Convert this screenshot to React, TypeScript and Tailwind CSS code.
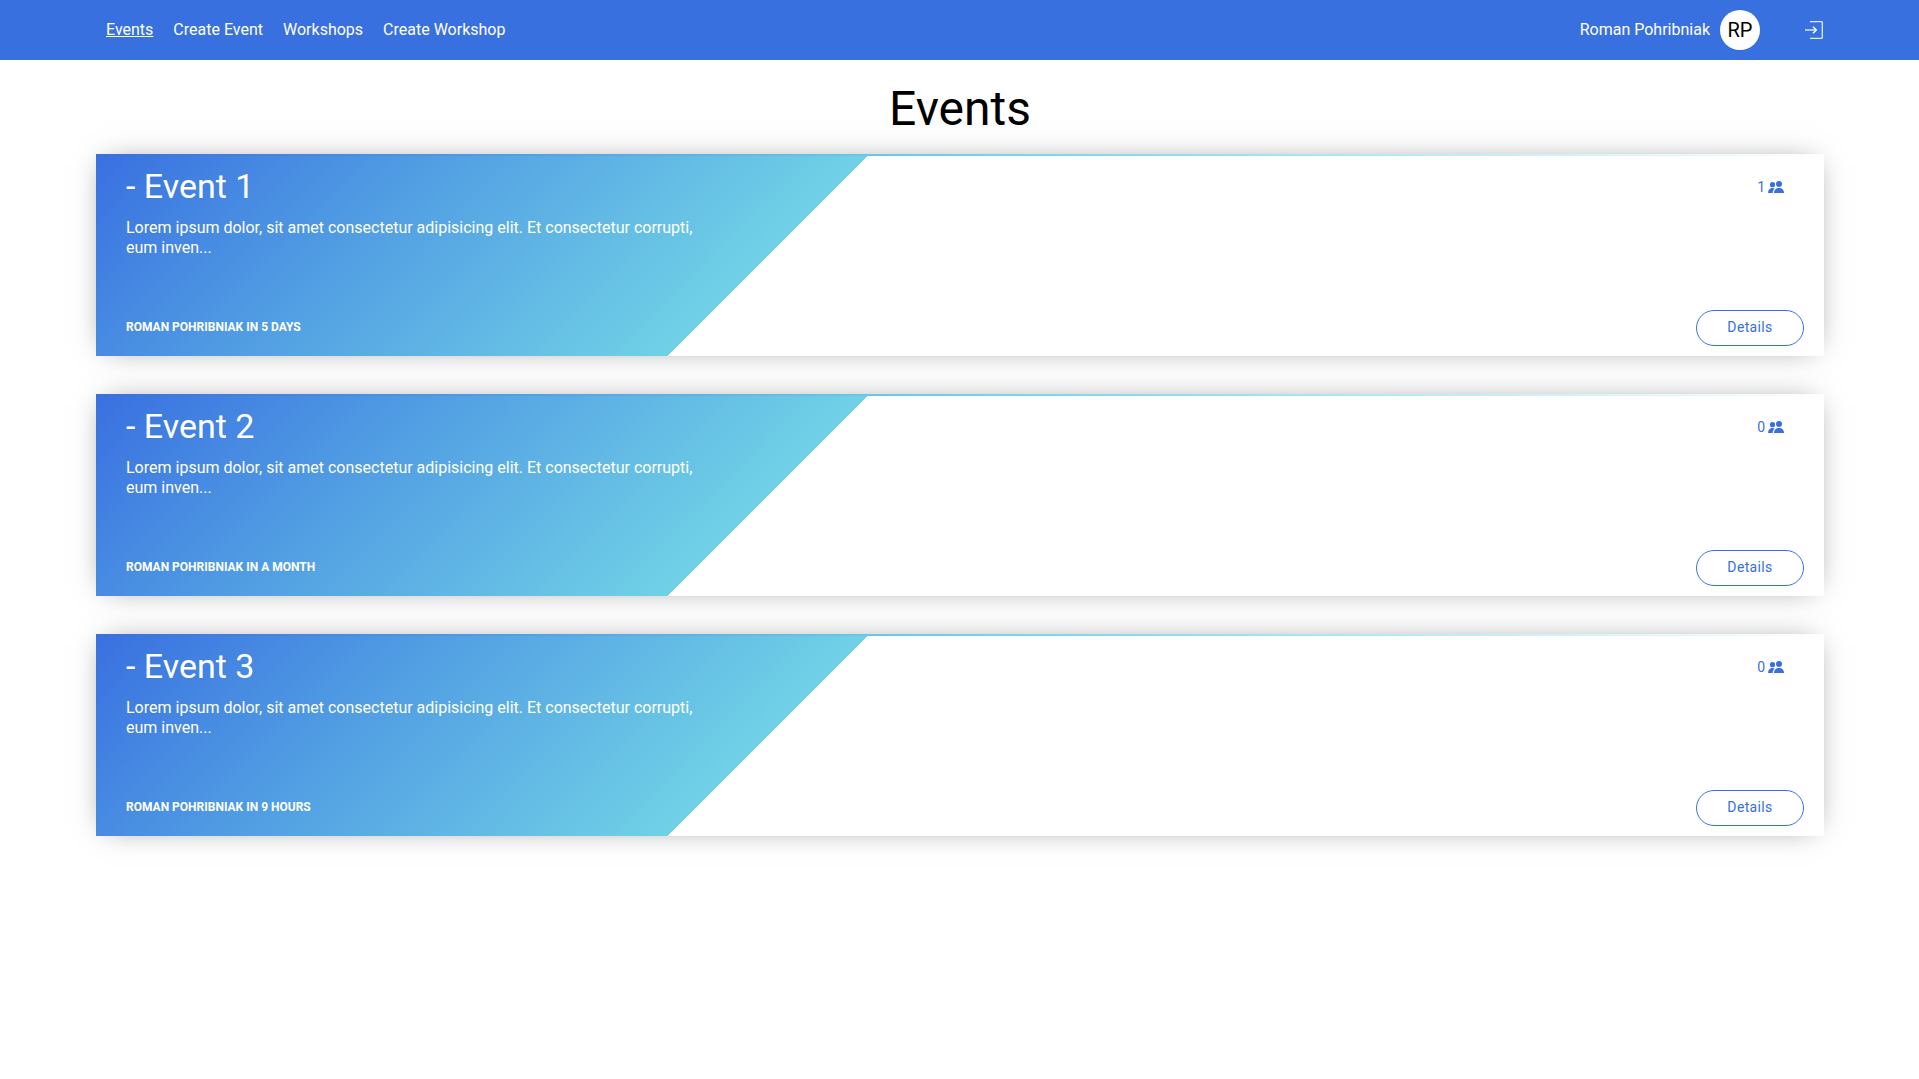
import React from "react";

type EventItem = { id: number; title: string; when: string; people: number };

const events: EventItem[] = [
  { id: 1, title: "Event 1", when: "in 5 days", people: 1 },
  { id: 2, title: "Event 2", when: "in a month", people: 0 },
  { id: 3, title: "Event 3", when: "in 9 hours", people: 0 },
];

const links = ["Events", "Create Event", "Workshops", "Create Workshop"];

function LogoutIcon() {
  return (
    <svg viewBox="0 0 18 18" className="h-[18px] w-[18px]" fill="none" stroke="currentColor" aria-hidden="true">
      <path d="M5 .7h11.500a.8.8 0 0 1 .8.8v15a.8.8 0 0 1-.8.8H5" strokeWidth="1.300" opacity=".85" />
      <path d="M0 9h11" strokeWidth="1.500" opacity=".8" />
      <path d="M8 5.800 11.200 9 8 12.200" strokeWidth="1.500" />
    </svg>
  );
}

function PeopleIcon() {
  return (
    <svg viewBox="0 0 16 12" className="h-3 w-4" fill="currentColor" aria-hidden="true">
      <circle cx="4.5" cy="3.7" r="2.6" />
      <circle cx="11" cy="3" r="3" />
      <path d="M6 12c0-3 2-5 5-5s5 2 5 5z" />
      <path d="M0 12c0-3 1.700-5 4.500-5 .9 0 1.700.2 2.300.5C5.500 8.500 4.800 10 4.700 12z" />
    </svg>
  );
}

function EventCard({ event }: { event: EventItem }) {
  return (
    <article className="shadow-[0_0_28px_-10px_rgba(0,0,0,0.5)]">
      <div className="h-0.5 bg-[linear-gradient(to_right,#3970e0,#70d1e6_50%,#ffffff)]" />
      <div className="flex h-[200px] justify-between bg-[linear-gradient(135deg,#3970e0,#4f9ae3_16%,#70d1e6_40%,#ffffff_40%)]">
        <div className="flex w-2/5 flex-col pl-[30px] text-white">
          <h2 className="pt-2.5 text-[34px] leading-[40px]">- {event.title}</h2>
          <p className="mt-3 w-[600px] text-base leading-5">
            Lorem ipsum dolor, sit amet consectetur adipisicing elit. Et consectetur corrupti, eum inven...
          </p>
          <p className="mt-auto mb-5 text-xs leading-[18px] font-bold uppercase">Roman Pohribniak {event.when}</p>
        </div>
        <div className="flex flex-col items-end justify-between pt-5 pr-5 pb-2.5 text-[#3970e0]">
          <div className="flex items-center gap-[3px] pr-5 text-sm leading-[22px]">
            <span>{event.people}</span>
            <PeopleIcon />
          </div>
          <button
            type="button"
            className="h-9 w-[108px] rounded-full border border-[#3970e0] pb-0.5 text-sm tracking-wide"
          >
            Details
          </button>
        </div>
      </div>
    </article>
  );
}

export default function App() {
  return (
    <div className="min-h-screen bg-white font-[Roboto,sans-serif] text-black">
      <header className="bg-[#3970e0] px-24 text-white">
        <div className="flex h-[60px] items-center justify-between">
          <nav className="flex gap-5 pl-2.5 text-base">
            {links.map((link, i) => (
              <a key={link} href="#" className={i === 0 ? "underline" : ""}>
                {link}
              </a>
            ))}
          </nav>
          <div className="flex items-center">
            <span>Roman Pohribniak</span>
            <span className="ml-2.5 flex h-10 w-10 items-center justify-center rounded-full bg-white text-xl text-black">
              RP
            </span>
            <button type="button" aria-label="Log out" className="ml-[45px]">
              <LogoutIcon />
            </button>
          </div>
        </div>
      </header>
      <main className="pr-[95px] pb-10 pl-24">
        <h1 className="pt-[21px] pb-[17px] text-center text-5xl leading-[56px]">Events</h1>
        <div className="flex flex-col gap-[38px]">
          {events.map((event) => (
            <EventCard key={event.id} event={event} />
          ))}
        </div>
      </main>
    </div>
  );
}
